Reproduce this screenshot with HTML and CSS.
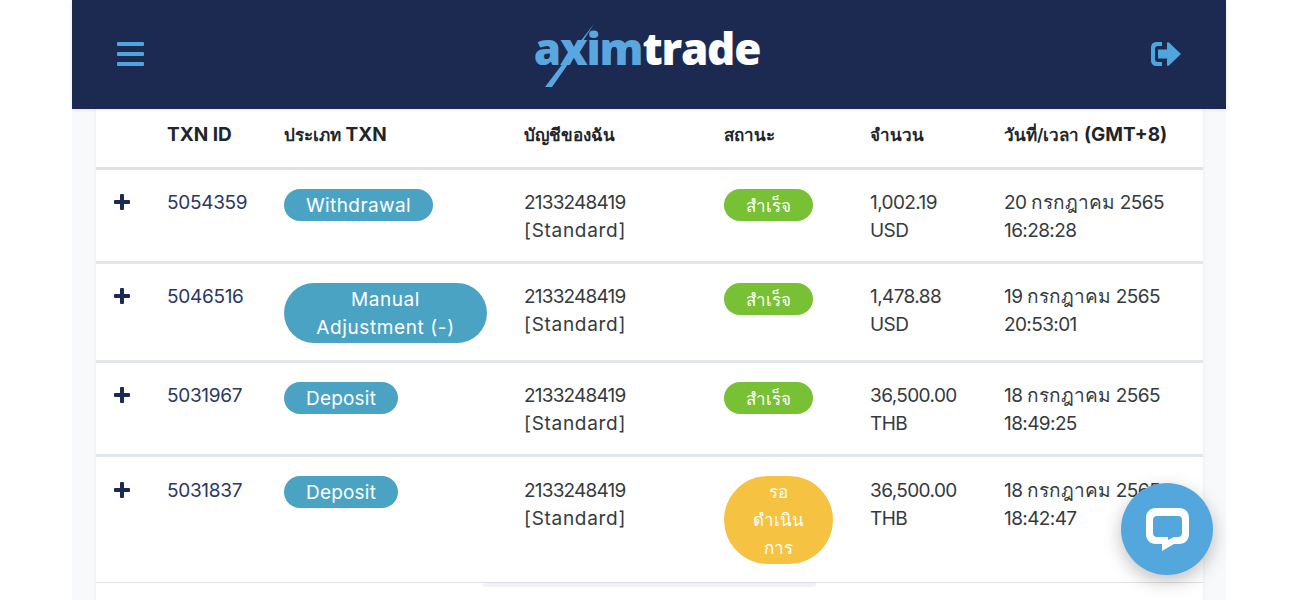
FILE: index.html
```html
<!DOCTYPE html>
<html lang="th">
<head>
    <meta charset="UTF-8">
    <meta name="viewport" content="width=device-width, initial-scale=1.0">
    <title>Transaction History</title>
    <link rel="stylesheet" href="styles.css">
</head>
<body>
    <div class="page">
        <header class="topbar">
            <svg class="menu-icon" width="28" height="24" viewBox="0 0 28 24">
                <rect x="0" y="0" width="27" height="4" rx="1"/>
                <rect x="0" y="10" width="27" height="4" rx="1"/>
                <rect x="0" y="20" width="27" height="4" rx="1"/>
            </svg>
            <div class="logo">
                <span class="logo-blue">axim</span><span class="logo-white">trade</span>
                <svg class="logo-swoosh" width="60" height="70" viewBox="0 0 60 70">
                    <path d="M50 4 L22 47 L8 67 L1 67 L20 42 Z"/>
                </svg>
            </div>
            <svg class="logout-icon" width="31" height="24" viewBox="0 0 31 24">
                <path d="M11 0 H6 C2 0 0 2 0 6 V18 C0 22 2 24 6 24 H11 V20 H7 C5 20 4 19 4 17 V7 C4 5 5 4 7 4 H11 Z"/>
                <path d="M7 7.500 H16 V1 C16 0 17 0 18 0.500 L30 12 L18 23.500 C17 24 16 24 16 23 V16.500 H7 Z"/>
            </svg>
        </header>

        <main class="content">
            <table class="txn-table">
                <colgroup>
                    <col class="col-toggle">
                    <col class="col-id">
                    <col class="col-type">
                    <col class="col-account">
                    <col class="col-status">
                    <col class="col-amount">
                    <col class="col-date">
                </colgroup>
                <thead>
                    <tr>
                        <th></th>
                        <th>TXN ID</th>
                        <th><span class="th">ประเภท</span> TXN</th>
                        <th><span class="th">บัญชีของฉัน</span></th>
                        <th><span class="th">สถานะ</span></th>
                        <th><span class="th">จำนวน</span></th>
                        <th><span class="th">วันที่/เวลา</span> (GMT+8)</th>
                    </tr>
                </thead>
                <tbody>
                    <tr>
                        <td><span class="plus"></span></td>
                        <td class="txn-id">5054359</td>
                        <td><span class="pill pill-type pill-long">Withdrawal</span></td>
                        <td class="acct">2133248419<br><span class="tag">[Standard]</span></td>
                        <td><span class="pill pill-ok"><span class="th">สำเร็จ</span></span></td>
                        <td>1,002.19<br>USD</td>
                        <td class="date">20 <span class="th">กรกฎาคม</span> 2565<br>16:28:28</td>
                    </tr>
                    <tr>
                        <td><span class="plus"></span></td>
                        <td class="txn-id">5046516</td>
                        <td><span class="pill pill-type pill-wide">Manual<br>Adjustment (-)</span></td>
                        <td class="acct">2133248419<br><span class="tag">[Standard]</span></td>
                        <td><span class="pill pill-ok"><span class="th">สำเร็จ</span></span></td>
                        <td>1,478.88<br>USD</td>
                        <td class="date">19 <span class="th">กรกฎาคม</span> 2565<br>20:53:01</td>
                    </tr>
                    <tr>
                        <td><span class="plus"></span></td>
                        <td class="txn-id">5031967</td>
                        <td><span class="pill pill-type">Deposit</span></td>
                        <td class="acct">2133248419<br><span class="tag">[Standard]</span></td>
                        <td><span class="pill pill-ok"><span class="th">สำเร็จ</span></span></td>
                        <td>36,500.00<br>THB</td>
                        <td class="date">18 <span class="th">กรกฎาคม</span> 2565<br>18:49:25</td>
                    </tr>
                    <tr class="last-row">
                        <td><span class="plus"></span></td>
                        <td class="txn-id">5031837</td>
                        <td><span class="pill pill-type">Deposit</span></td>
                        <td class="acct">2133248419<br><span class="tag">[Standard]</span></td>
                        <td><span class="pill pill-wait"><span class="th">รอ<br>ดำเนิน<br>การ</span></span></td>
                        <td>36,500.00<br>THB</td>
                        <td class="date">18 <span class="th">กรกฎาคม</span> 2565<br>18:42:47</td>
                    </tr>
                    <tr class="next-row">
                        <td colspan="7"></td>
                    </tr>
                </tbody>
            </table>
            <div class="scroll-shadow"></div>
        </main>
    </div>

    <div class="chat-button">
        <svg width="44" height="44" viewBox="0 0 44 44">
            <path d="M10 0 H33 C39 0 43 4 43 10 V26 C43 32 39 36 33 36 H28 L16 43 V36 H10 C4 36 0 32 0 26 V10 C0 4 4 0 10 0 Z M11 8 C8.500 8 7 9.500 7 12 V25 C7 27.500 8.500 29 11 29 H22 V32 L28 29 H32 C34.500 29 36 27.500 36 25 V12 C36 9.500 34.500 8 32 8 Z" fill-rule="evenodd"/>
        </svg>
    </div>
</body>
</html>
```

FILE: styles.css
```css
* {
    box-sizing: border-box;
}
html, body {
    height: 600px;
    overflow: hidden;
}
body {
    margin: 0;
    background-color: #fff;
    font-family: "Inter", "Noto Sans", sans-serif;
    font-size: 19px;
    line-height: 28px;
    color: #343a40;
}
.page {
    width: 1154px;
    margin-left: 72px;
    background-color: #f8f9fa;
}
.topbar {
    position: relative;
    display: flex;
    align-items: center;
    justify-content: space-between;
    height: 109px;
    padding: 0 44px 2px 45px;
    background-color: #1c2951;
    box-shadow: 0 1px 3px rgba(0, 0, 0, 0.1);
    z-index: 2;
}
.menu-icon, .logout-icon {
    fill: #4fa6de;
}
.logo {
    position: relative;
    margin: -12px 0 0 -2px;
    font-family: "Open Sans", sans-serif;
    font-size: 44px;
    line-height: 60px;
    font-weight: 800;
    letter-spacing: -1.2px;
}
.logo-blue {
    color: #5aa6df;
}
.logo-white {
    color: #fff;
}
.logo-swoosh {
    position: absolute;
    left: 10px;
    top: 2px;
    fill: #5aa6df;
}
.content {
    position: relative;
    height: 491px;
    padding: 0 23px 0 24px;
}
.txn-table {
    width: 1107px;
    table-layout: fixed;
    border-collapse: collapse;
    background-color: #fff;
    box-shadow: 0 0 4px rgba(0, 0, 0, 0.06);
}
.col-toggle { width: 53px; }
.col-id { width: 117px; }
.col-type { width: 240px; }
.col-account { width: 200px; }
.col-status { width: 146px; }
.col-amount { width: 134px; }
.col-date { width: 217px; }
th, td {
    text-align: left;
    vertical-align: top;
    white-space: nowrap;
}
th {
    height: 59px;
    padding: 12px 18px 0;
    font-weight: 700;
    color: #212529;
    border-bottom: 3px solid #dee2e6;
}
td {
    padding: 19px 18px 16px;
    letter-spacing: -0.6px;
    border-bottom: 3px solid #e3e6ea;
}
.last-row td {
    padding-top: 20px;
    padding-bottom: 18px;
    border-bottom: 1px solid #dfe1e6;
}
.last-row .pill {
    margin-top: -1px;
}
.next-row td {
    height: 40px;
    border-bottom: none;
}
.th {
    font-size: 17px;
    letter-spacing: 0;
}
th .th {
    font-weight: 600;
}
.date .th {
    font-size: 19px;
}
.txn-id {
    color: #2b3763;
    letter-spacing: -0.3px;
}
.acct {
    letter-spacing: -0.8px;
}
.tag {
    letter-spacing: 0.7px;
}
.plus {
    position: relative;
    display: block;
    width: 16px;
    height: 16px;
    margin-top: 5px;
}
.plus::before, .plus::after {
    content: "";
    position: absolute;
    background-color: #1c2951;
    border-radius: 1px;
}
.plus::before {
    left: 0;
    top: 6px;
    width: 16px;
    height: 4px;
}
.plus::after {
    left: 6px;
    top: 0;
    width: 4px;
    height: 16px;
}
.pill {
    display: inline-block;
    vertical-align: top;
    padding: 3px 22px 1px;
    border-radius: 30px;
    color: #fff;
    text-align: center;
    letter-spacing: 0.2px;
}
.pill-type {
    background-color: #4ba3c3;
}
.pill-long {
    letter-spacing: 0.4px;
}
.pill-wide {
    width: 203px;
    margin-bottom: 1px;
    letter-spacing: 0.6px;
}
.pill-ok {
    background-color: #78c034;
}
.pill-wait {
    padding: 2px 29px;
    border-radius: 44px;
    background-color: #f5c242;
}
.scroll-shadow {
    position: absolute;
    left: 411px;
    top: 474px;
    width: 333px;
    height: 4px;
    border-radius: 0 0 3px 3px;
    background-color: #f1f2f5;
}
.chat-button {
    position: fixed;
    left: 1121px;
    top: 483px;
    display: flex;
    align-items: center;
    justify-content: center;
    width: 92px;
    height: 92px;
    padding: 2px 0 0 1px;
    border-radius: 50%;
    background-color: #53a7dc;
    box-shadow: 0 6px 18px rgba(0, 0, 0, 0.25);
    fill: #fff;
    z-index: 3;
}
```
